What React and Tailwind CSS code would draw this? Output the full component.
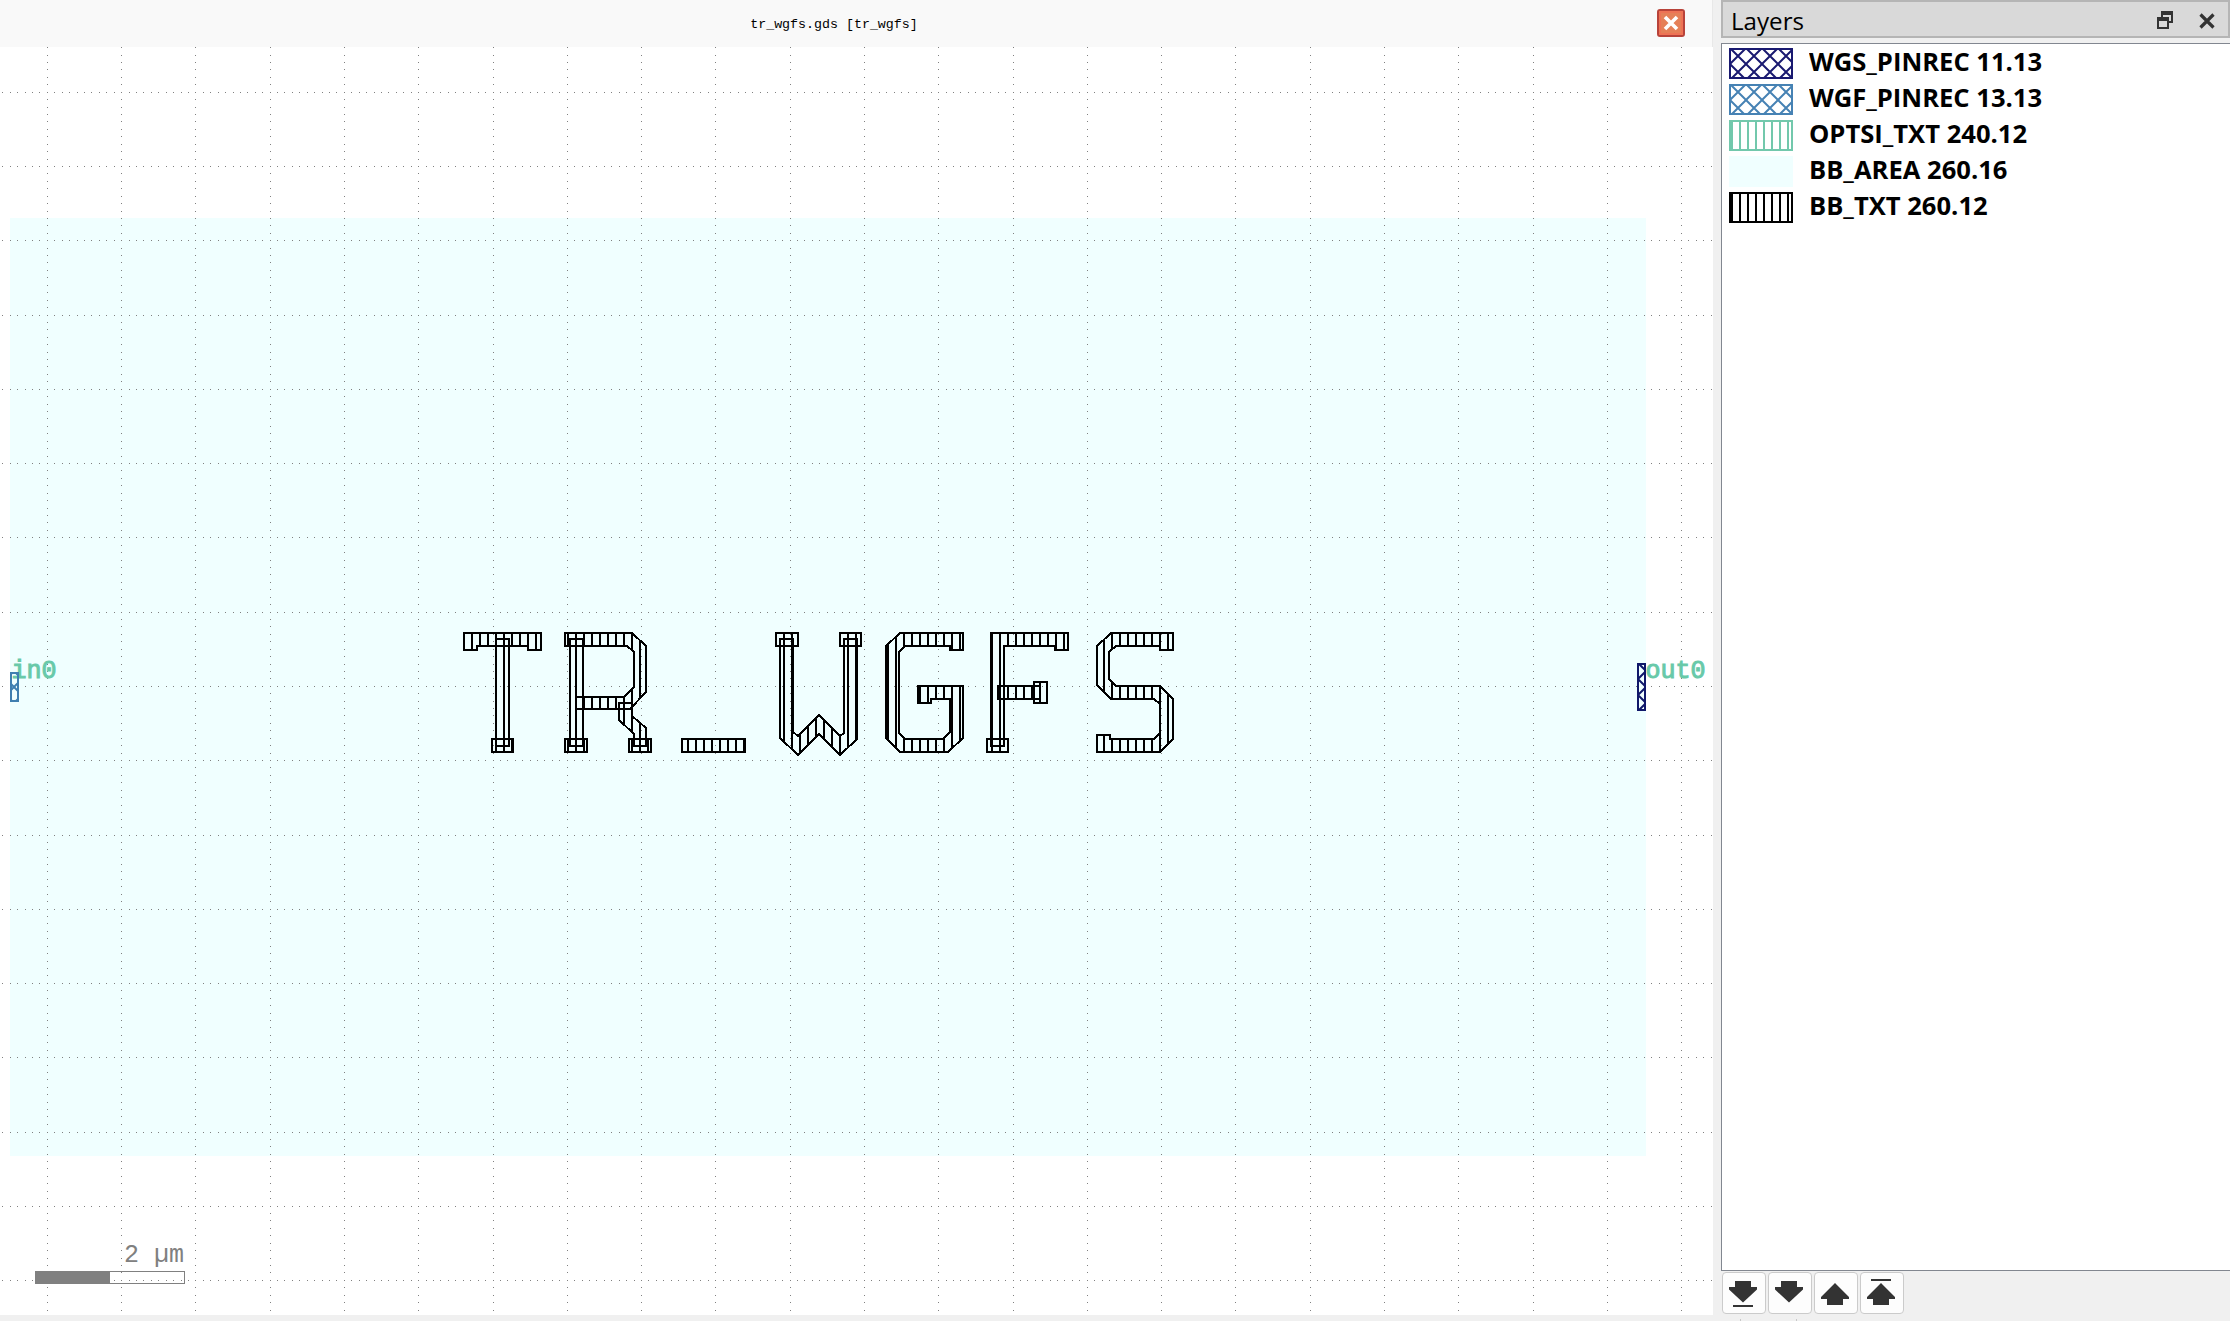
const GRID_X = { start: 46.9, pitch: 74.28, bias: 0.4 };
const GRID_Y = { start: 91.9, pitch: 74.26, bias: 0.3 };
const dot = (axis, j) => Math.floor(axis.start + (axis.pitch / 10) * j + axis.bias);
const line = (axis, k) => Math.round(axis.start + axis.pitch * k);

function gridPath() {
  let d = "";
  for (let k = 0; k <= 22; k++) {
    const x = line(GRID_X, k);
    for (let j = -6; j <= 165; j++) {
      const y = (j % 10 === 0 ? line(GRID_Y, j / 10) : dot(GRID_Y, j)) - 47;
      if (y >= 0 && y < 1268) d += `M${x} ${y}h1v1h-1z`;
    }
  }
  for (let k = 0; k <= 16; k++) {
    const y = line(GRID_Y, k) - 47;
    for (let j = -6; j <= 225; j++) {
      const x = dot(GRID_X, j);
      if (j % 10 !== 0 && x >= 0 && x < 1713) d += `M${x} ${y}h1v1h-1z`;
    }
  }
  return d;
}

const GRID = gridPath();

const GLYPHS = [
  // T
  "464,633 541,633 541,650 528,650 528,646 477,646 477,650 464,650",
  "496,639 509,639 509,746 496,746",
  "492,739 513,739 513,752 492,752",
  // R
  "565,633 632,633 646,646 646,692 630,709 576,709 576,697 624,697 634,687 634,652 627,646 565,646",
  "570,639 583,639 583,746 570,746",
  "565,739 587,739 587,752 565,752",
  "619,703 632,703 632,716 646,728 646,746 634,746 634,734 619,720",
  "629,739 651,739 651,752 629,752",
  // underscore
  "682,739 745,739 745,752 682,752",
  // W
  "776,633 798,633 798,646 776,646",
  "780,639 793,639 793,732 798,736 819,715 840,736 844,733 844,639 857,639 857,739 840,755 819,734 798,755 780,738",
  "840,633 861,633 861,646 840,646",
  // G
  "900,633 963,633 963,650 950,650 950,646 905,646 899,652 899,733 905,739 943,739 950,732 950,699 931,699 931,703 918,703 918,686 963,686 963,738 948,752 900,752 886,738 886,646",
  // F
  "991,633 1068,633 1068,650 1055,650 1055,646 1004,646 1004,746 991,746",
  "987,739 1008,739 1008,752 987,752",
  "998,686 1040,686 1040,699 998,699",
  "1034,682 1047,682 1047,703 1034,703",
  // S
  "1111,633 1173,633 1173,650 1160,650 1160,646 1116,646 1109,652 1109,679 1116,686 1160,686 1173,699 1173,739 1160,752 1097,752 1097,735 1110,735 1110,739 1154,739 1160,733 1160,704 1154,699 1111,699 1097,685 1097,646",
];

function CrossPattern({ id, color, x, y }) {
  return (
    <pattern id={id} x={x} y={y} width="16" height="16" patternUnits="userSpaceOnUse">
      <path d="M-2 -2L18 18M-2 18L18 -2M14 -2L18 2M-2 14L2 18M-2 2L2 -2M14 18L18 14" stroke={color} strokeWidth="2" fill="none" />
    </pattern>
  );
}

function LayoutCanvas() {
  return (
    <svg className="block h-[1268px] w-[1713px] bg-white" viewBox="0 0 1713 1268">
      <defs>
        <pattern id="bars" width="8" height="8" patternUnits="userSpaceOnUse">
          <path d="M0 0h1v8h-1zM7 0h1v8h-1z" fill="#000" />
        </pattern>
        <CrossPattern id="pin-in" color="#3f7fb0" x={14} y={687} />
        <CrossPattern id="pin-out" color="#10186a" x={1646} y={687} />
      </defs>
      <rect x="10" y="171" width="1636" height="938" fill="#f0ffff" />
      <path d={GRID} fill="#808080" shapeRendering="crispEdges" />
      <g transform="translate(0 -47)">
        <g fill="url(#bars)" stroke="#000" strokeWidth="2" shapeRendering="crispEdges">
          {GLYPHS.map((p) => (
            <polygon key={p} points={p} />
          ))}
        </g>
        <g className="font-['Liberation_Mono',monospace] text-[25px]" fill="#68c9a9" stroke="#68c9a9" strokeWidth="1">
          <text x="11.5" y="677.5">in0</text>
          <text x="1645.5" y="677.5">out0</text>
        </g>
        <rect x="11" y="673" width="7" height="28" fill="url(#pin-in)" stroke="#3f7fb0" strokeWidth="2" />
        <rect x="1638" y="664" width="7" height="46" fill="url(#pin-out)" stroke="#10186a" strokeWidth="2" />
        <text x="124" y="1262" fill="#808080" className="font-['Liberation_Mono',monospace] text-[25px] whitespace-pre">2 µm</text>
        <rect x="35.5" y="1271.5" width="149" height="12" fill="none" stroke="#808080" />
        <rect x="35" y="1271" width="75" height="13" fill="#808080" />
      </g>
    </svg>
  );
}

function Swatch({ kind, color, id }) {
  if (kind === "solid") return <div className="h-[31px] w-16 bg-[#f0ffff]" />;
  return (
    <svg className="block h-[31px] w-16" viewBox="0 0 64 31">
      <defs>
        {kind === "cross" ? (
          <CrossPattern id={id} color={color} x={1} y={0} />
        ) : (
          <pattern id={id} x="2" width="8" height="8" patternUnits="userSpaceOnUse">
            <path d="M0 0h2v8h-2z" fill={color} />
          </pattern>
        )}
      </defs>
      <rect x="1" y="1" width="62" height="29" fill={`url(#${id})`} stroke={color} strokeWidth="2" />
    </svg>
  );
}

const LAYERS = [
  { name: "WGS_PINREC 11.13", kind: "cross", color: "#191970" },
  { name: "WGF_PINREC 13.13", kind: "cross", color: "#4682b4" },
  { name: "OPTSI_TXT 240.12", kind: "bars", color: "#72c8ac" },
  { name: "BB_AREA 260.16", kind: "solid", color: "#f0ffff" },
  { name: "BB_TXT 260.12", kind: "bars", color: "#000000" },
];

const DOWN = "M13 9h16v6h6v2.5L21 30.5L7 17.5V15h6z";
const UP = "M21 11L35 25v2h-6v6H13v-6H7v-2z";
const MOVES = [
  { label: "bottom", d: DOWN + "M11 33h20v2H11z" },
  { label: "down", d: DOWN },
  { label: "up", d: UP },
  { label: "top", d: UP + "M11 7h20v2H11z" },
];

function LayersPanel() {
  return (
    <aside className="flex h-full w-[509px] flex-col">
      <header className="flex h-[38px] items-center border-2 border-[#b5b5b5] bg-[#d9d9d9] pl-2 pr-[13px]">
        <h2 className="origin-left scale-x-[0.985] whitespace-nowrap pt-[3px] font-['Open_Sans',sans-serif] text-[24.5px] leading-[31px] text-black">Layers</h2>
        <svg className="ml-auto mt-[2px] h-[18px] w-4" viewBox="0 0 16 18" fill="#333">
          <path d="M4 0h12v12h-4v-2h2V4H6v2H4z" />
          <path fillRule="evenodd" d="M0 6h12v12H0zM2 10v6h8v-6z" />
        </svg>
        <svg className="ml-[26px] mt-[4px] h-4 w-4" viewBox="0 0 16 16" stroke="#333" strokeWidth="3.2">
          <path d="M1.5 1.5l13 13M14.5 1.5l-13 13" />
        </svg>
      </header>
      <ul className="mt-[5px] flex h-[1228px] flex-col gap-[5px] border-y border-l border-[#828790] bg-white pl-[7px] pt-1">
        {LAYERS.map((l, i) => (
          <li key={l.name} className="flex h-[31px] items-center gap-4">
            <Swatch kind={l.kind} color={l.color} id={`swatch-${i}`} />
            <span className="origin-left scale-x-[1.044] whitespace-nowrap pb-[3px] font-['Open_Sans',sans-serif] text-[24.5px] font-bold leading-[28px] text-black">{l.name}</span>
          </li>
        ))}
      </ul>
      <div className="mt-px flex gap-[2px] pl-px">
        {MOVES.map((m) => (
          <button key={m.label} aria-label={m.label} className="h-[42px] w-11 rounded-[4px] border border-[#cbcbcb] bg-[#fdfdfd]">
            <svg className="-ml-px -mt-px block h-[42px] w-11" viewBox="0 0 44 42" fill="#333">
              <path d={m.d} />
            </svg>
          </button>
        ))}
      </div>
      <div className="mt-auto flex h-[2px] gap-[55px] pl-[19px]">
        <i className="w-px bg-[#c8c8c8]" />
        <i className="w-px bg-[#c8c8c8]" />
      </div>
    </aside>
  );
}

export default function App() {
  return (
    <div className="flex h-[1321px] w-[2230px] overflow-hidden bg-[#f0f0f0]">
      <main className="mr-2 flex w-[1713px] flex-col">
        <div className="flex h-[47px] items-center border-r border-[#e8e8e8] bg-[#f9f9f9] pr-[27px]">
          <span className="ml-[11px] flex-1 pt-[2px] text-center font-['Liberation_Mono',monospace] text-[13.3px] text-black">tr_wgfs.gds [tr_wgfs]</span>
          <svg className="mb-px h-7 w-7" viewBox="0 0 28 28">
            <rect x="1" y="1" width="26" height="26" rx="2" fill="#e58058" stroke="#b8433a" strokeWidth="2" />
            <rect x="3" y="3" width="22" height="22" fill="none" stroke="#ee7355" strokeWidth="2" />
            <path d="M8 8l12 12M20 8l-12 12" stroke="#fff" strokeWidth="3.6" />
          </svg>
        </div>
        <LayoutCanvas />
      </main>
      <LayersPanel />
    </div>
  );
}
